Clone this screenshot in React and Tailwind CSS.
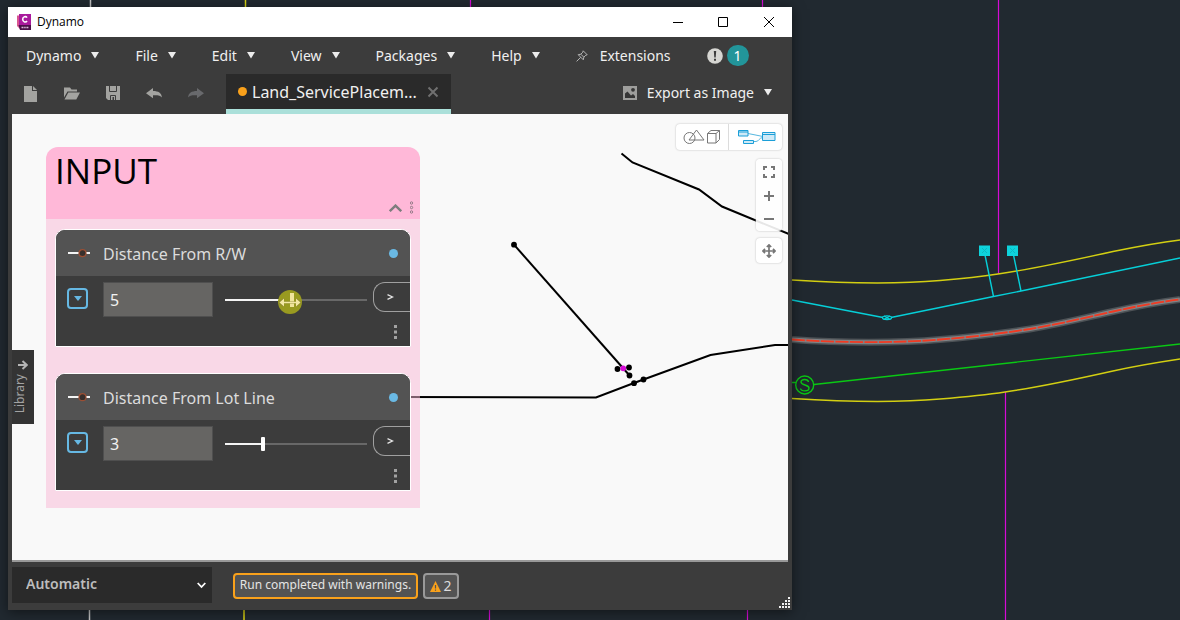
import { useState } from "react";

const menus = ["Dynamo", "File", "Edit", "View", "Packages", "Help"];

function Caret() {
  return (
    <svg width="8" height="8" viewBox="0 0 8 8" aria-hidden="true">
      <path d="M0 0h8L4 6.500z" fill="#ececec" />
    </svg>
  );
}

function SiteDrawing() {
  return (
    <svg
      className="absolute inset-0 h-full w-full"
      viewBox="0 0 1180 620"
      preserveAspectRatio="xMinYMin slice"
      fill="none"
      aria-hidden="true"
    >
      <path d="M90.500 0V8M89.500 608V620" stroke="#c4c4c4" strokeWidth="1.500" />
      <path d="M245.500 0V8" stroke="#d9d514" strokeWidth="1.500" />
      <path d="M244 608V620" stroke="#b0ac18" strokeWidth="2" />
      <path d="M470.500 0V8M762.500 0V8M489.500 608V620M747.500 608V620M998.500 0V274M1005.500 392V620" stroke="#d60bd6" strokeWidth="1.200" />
      <path
        d="M792 280C840 283 900 284 940 280.500C970 278 985 276 998 274C1035 268.500 1070 261 1113 251.500C1140 246 1160 242.500 1180 240"
        stroke="#d3cf12"
        strokeWidth="1.400"
      />
      <path
        d="M792 398.500C840 401.500 900 402.500 940 399C970 396.500 985 395 1005 392C1040 387 1075 379.500 1113 371C1140 365 1160 362 1180 359"
        stroke="#d3cf12"
        strokeWidth="1.400"
      />
      <g id="centerline">
        <path
          d="M792 339.500C840 343 900 343 940 339.500C980 336.500 1010 332 1030 329C1065 323 1090 316.500 1113 311.500C1140 305.500 1160 302 1180 299.500"
          stroke="#4d5256"
          strokeWidth="7"
        />
        <path
          d="M792 339.500C840 343 900 343 940 339.500C980 336.500 1010 332 1030 329C1065 323 1090 316.500 1113 311.500C1140 305.500 1160 302 1180 299.500"
          stroke="#7f8285"
          strokeWidth="4"
        />
        <path
          d="M792 339.500C840 343 900 343 940 339.500C980 336.500 1010 332 1030 329C1065 323 1090 316.500 1113 311.500C1140 305.500 1160 302 1180 299.500"
          stroke="#f23a22"
          strokeWidth="1.800"
          strokeDasharray="13 1.500"
        />
      </g>
      <g stroke="#06cfd8" strokeWidth="1.400">
        <path d="M792 300L883 317.500M891 317.500L993.500 296.500L1021 291L1180 258" />
        <path d="M985 255L993.500 296.500M1013.500 255L1021 291" />
        <ellipse cx="887" cy="317.700" rx="4.500" ry="1.800" />
        <path d="M884 316L890 319.500M884 319.500L890 316" />
      </g>
      <g fill="#0ed3dc">
        <rect x="979" y="245.500" width="11" height="10.500" />
        <rect x="1007" y="245.500" width="11" height="10.500" />
      </g>
      <path d="M982 248l5 5M987 248l-5 5M1010 248l5 5M1015 248l-5 5" stroke="#0cb8c2" />
      <g stroke="#0ac814" strokeWidth="1.400">
        <path d="M792 382.500H796M814 384.500L1180 344" />
        <circle cx="804.700" cy="385" r="9" />
        <path d="M808.500 382C808 379 801 378.500 801 382C801 385.500 809 384.500 809 388C809 392 801 391.500 800.500 388.500" />
      </g>
    </svg>
  );
}

function TitleBar() {
  return (
    <header className="flex h-[30px] items-center bg-white">
      <svg className="ml-[9px]" width="15" height="16" viewBox="0 0 15 16" aria-hidden="true">
        <path d="M0 1.500H3V15L0 12z" fill="#d8568f" />
        <path d="M2 0H14V11H2z" fill="#a91a9c" />
        <path d="M1.500 11H14V16H3z" fill="#4b1149" />
        <path d="M10 3.600C9 2 5.700 2.200 5.700 5.300S9 8.600 10 7" stroke="#fff" strokeWidth="1.600" fill="none" />
        <path d="M4.500 13.500h2m.7 0h1.500m.7 0h2" stroke="#d9b9d8" strokeWidth="1.500" />
      </svg>
      <h1 className="ml-[5px] font-['Open_Sans',sans-serif] text-xs text-black">Dynamo</h1>
      <div className="ml-auto flex h-full">
        <button type="button" aria-label="Minimize" className="grid w-[46px] place-items-center">
          <svg width="11" height="11" viewBox="0 0 11 11" stroke="#000">
            <path d="M1 5.500H11" />
          </svg>
        </button>
        <button type="button" aria-label="Maximize" className="grid w-[46px] place-items-center">
          <svg width="11" height="11" viewBox="0 0 11 11" stroke="#000" fill="none">
            <path d="M.5 .5H9.500V9.500H.5z" />
          </svg>
        </button>
        <button type="button" aria-label="Close" className="grid w-[46px] place-items-center">
          <svg width="11" height="11" viewBox="0 0 11 11" stroke="#000">
            <path d="M0 0L10 10M10 0L0 10" />
          </svg>
        </button>
      </div>
    </header>
  );
}

function MenuBar() {
  return (
    <nav className="flex h-[37px] items-center gap-9 whitespace-nowrap pl-[18px] text-sm text-[#f0f0f0]">
      {menus.map((name) => (
        <button key={name} type="button" className="flex items-center gap-2.5">
          {name}
          <Caret />
        </button>
      ))}
      <button type="button" className="flex items-center gap-3">
        <svg width="12" height="12" viewBox="0 0 12 12" fill="none" stroke="#b5b5b5" strokeWidth="1">
          <path d="M7.200 .8L11.200 4.800L9.800 5.200L7.800 7.200L7.300 9.800L2.200 4.700L4.800 4.200L6.800 2.200zM4.700 7.300L.6 11.400M4.800 4.200L7.800 7.200" />
        </svg>
        Extensions
      </button>
      <div className="flex items-center gap-1">
        <button type="button" aria-label="Notifications">
          <svg width="16" height="16" viewBox="0 0 16 16">
            <circle cx="8" cy="8" r="7.800" fill="#d6d6d2" />
            <path d="M6.800 3h2.400L8.700 9.500H7.300zM7 10.800h2v2H7z" fill="#3c3c3c" />
          </svg>
        </button>
        <span className="grid h-[21px] w-[22px] place-items-center rounded-full bg-[#22959a] text-white">1</span>
      </div>
    </nav>
  );
}

function Toolbar() {
  return (
    <div className="flex h-10 items-stretch whitespace-nowrap text-[#f0f0f0]">
      <div className="flex w-[218px] shrink-0 items-center gap-[25px] pb-0.5 pl-[15px]">
        <button type="button" aria-label="New">
          <svg width="16" height="17" viewBox="0 0 16 17" fill="#a3a3a0">
            <path d="M1 1H9V6H14V17H1zM10 1L14 5H10z" />
          </svg>
        </button>
        <button type="button" aria-label="Open">
          <svg width="17" height="16" viewBox="0 0 17 16" fill="#a3a3a0">
            <path d="M0 2.500H6L7.500 4.500H13V6.500H3.500L0 12.500z" />
            <path d="M4.300 7.500H16L12.300 14.500H.5z" />
          </svg>
        </button>
        <button type="button" aria-label="Save">
          <svg width="15" height="15" viewBox="0 0 15 15">
            <path d="M0 0H14V14H2L0 12z" fill="#a3a3a0" />
            <path d="M3.500 0V5.500H10.500V0M4.500 14V9.500H9.500V14" fill="none" stroke="#3c3c3c" />
            <path d="M6.500 11H8V14H6.500z" fill="#3c3c3c" />
          </svg>
        </button>
        <button type="button" aria-label="Undo">
          <svg width="17" height="12" viewBox="0 0 17 12" fill="#a3a3a0">
            <path d="M7 1V4C12.500 4 15.500 6 16 10.500C14 8.200 11.500 8.200 7 8.200V11.300L0 6.200z" />
          </svg>
        </button>
        <button type="button" aria-label="Redo">
          <svg width="17" height="12" viewBox="0 0 17 12" fill="#68696c">
            <path d="M9 1V4C3.500 4 .5 6 0 10.500C2 8.200 4.500 8.200 9 8.200V11.300L16 6.200z" />
          </svg>
        </button>
      </div>
      <div className="flex w-[225px] shrink-0 items-center border-b-[5px] border-[#abe0da] bg-[#2a2a2a] pl-3">
        <span className="h-[9px] w-[9px] rounded-full bg-[#f9a11b]" />
        <span className="ml-[5px] text-base">Land_ServicePlacem...</span>
        <button type="button" aria-label="Close tab" className="ml-auto mr-3">
          <svg width="12" height="12" viewBox="0 0 12 12" stroke="#707070" strokeWidth="2">
            <path d="M1.500 1.500L10.500 10.500M10.500 1.500L1.500 10.500" />
          </svg>
        </button>
      </div>
      <button type="button" className="ml-auto mr-5 flex items-center gap-2.5 pb-0.5 text-sm">
        <svg width="14" height="14" viewBox="0 0 14 14">
          <path d="M0 0H14V14H0z" fill="#9e9e9c" />
          <circle cx="10" cy="3.800" r="1.900" fill="#353535" />
          <path d="M2 7.500L4.500 5.500L8 9.500L10 8L12 10V12H2z" fill="#353535" />
        </svg>
        Export as Image
        <Caret />
      </button>
    </div>
  );
}

function SliderNode({ title, initial }) {
  const [value, setValue] = useState(initial);
  const min = 0.5;
  const max = 10;
  const filled = ((value - min) / (max - min)) * 100;
  const update = (event) => setValue(Number(event.target.value) || 0);
  return (
    <section className="overflow-hidden rounded-t-[10px] border border-white bg-[#3c3c3c]">
      <div className="flex h-[46px] items-center bg-[#535353] pl-3 pr-3 pt-px">
        <svg width="23" height="10" viewBox="0 0 23 10" aria-hidden="true">
          <path d="M0 4H11M18 4H22" stroke="#f4f4f4" strokeWidth="2" />
          <circle cx="14.500" cy="4.200" r="3.500" fill="#38302d" stroke="#9a4f34" strokeWidth="1.200" />
        </svg>
        <h3 className="ml-3 text-base text-[#dcdcdc]">{title}</h3>
        <span className="ml-auto h-[9px] w-[9px] rounded-full bg-[#6ab9e4]" />
      </div>
      <div className="flex h-[41px] items-center pl-[11px] pt-1.5">
        <button
          type="button"
          aria-label={`${title} range`}
          className="mt-1.5 grid h-[21px] w-[21px] shrink-0 place-items-center self-start rounded-sm border-2 border-[#66b8e3]"
        >
          <svg width="8" height="5" viewBox="0 0 8 5">
            <path d="M0 0H8L4 5z" fill="#66b8e3" />
          </svg>
        </button>
        <input
          type="text"
          aria-label={`${title} value`}
          value={value}
          onChange={update}
          className="ml-[15px] h-[35px] w-[110px] border border-[#4f4f4f] bg-[#666563] pl-1.5 text-base text-[#f2f2f2]"
        />
        <input
          type="range"
          aria-label={title}
          min={min}
          max={max}
          step="0.5"
          value={value}
          onChange={update}
          style={{ backgroundImage: `linear-gradient(to right, #f4f4f4 ${filled}%, #686868 ${filled}%)` }}
          className="ml-3 h-0.5 w-[142px] appearance-none [&::-webkit-slider-thumb]:h-3.5 [&::-webkit-slider-thumb]:w-1 [&::-webkit-slider-thumb]:appearance-none [&::-webkit-slider-thumb]:rounded-[1px] [&::-webkit-slider-thumb]:bg-white"
        />
        <button
          type="button"
          aria-label={`${title} output`}
          className="ml-1.5 flex h-[30px] flex-1 items-center self-start rounded-l-xl border border-r-0 border-[#a0a0a0] pl-[13px]"
        >
          <svg width="7" height="7" viewBox="0 0 7 7" fill="none" stroke="#e5e5e5" strokeWidth="1.300">
            <path d="M.5 .7L5.500 3L.5 5.400" />
          </svg>
        </button>
      </div>
      <div className="flex h-[29px] items-center justify-end pr-[13px]">
        <button type="button" aria-label={`${title} options`}>
          <svg width="3" height="14" viewBox="0 0 3 14" fill="#a2a2a2">
            <path d="M0 0H3V3H0zM0 5.500H3V8.500H0zM0 11H3V14H0z" />
          </svg>
        </button>
      </div>
    </section>
  );
}

function InputGroup() {
  return (
    <section className="absolute left-[34px] top-[33px] w-[374px] overflow-hidden rounded-t-xl">
      <div className="flex h-[72px] justify-between bg-[#ffb8d8] pl-[9px] pr-[6px]">
        <h2 className="font-['Open_Sans',sans-serif] text-[35px] leading-[48px] text-black">INPUT</h2>
        <div className="flex items-center gap-2 self-end pb-[5px]">
          <button type="button" aria-label="Collapse group">
            <svg width="13" height="8" viewBox="0 0 13 8" fill="none" stroke="#7d7d7d" strokeWidth="2.400">
              <path d="M.8 7.200L6.500 1.600L12.200 7.200" />
            </svg>
          </button>
          <button type="button" aria-label="Group options">
            <svg width="4" height="13" viewBox="0 0 4 13" fill="none" stroke="#8a7580" strokeWidth=".9">
              <circle cx="1.500" cy="2" r="1.200" />
              <circle cx="1.500" cy="6.500" r="1.200" />
              <circle cx="1.500" cy="11" r="1.200" />
            </svg>
          </button>
        </div>
      </div>
      <div className="flex flex-col gap-[26px] bg-[#f9b7d5]/50 px-[9px] pb-[17px] pt-2.5">
        <SliderNode title="Distance From R/W" initial={5} />
        <SliderNode title="Distance From Lot Line" initial={3} />
      </div>
    </section>
  );
}

function Geometry() {
  return (
    <svg className="absolute inset-0 h-full w-full" aria-hidden="true">
      <g transform="translate(-12 -114)">
        <g fill="none" stroke="#000" strokeWidth="2">
          <path d="M621.500 153.500L632.500 162.500L699 189.500L722 206.500L790 234.500" />
          <path d="M514 244.700L630 376" />
          <path d="M400 397L596 397.500L634 383L643.500 379.500L710.500 355L775 345H790" />
        </g>
        <g fill="#000">
          <circle cx="514" cy="244.700" r="2.900" />
          <circle cx="617.500" cy="369" r="2.900" />
          <circle cx="629" cy="367.500" r="2.900" />
          <circle cx="629.500" cy="375.500" r="2.900" />
          <circle cx="634" cy="383.200" r="2.900" />
          <circle cx="643.500" cy="379.500" r="2.900" />
        </g>
        <circle cx="623.200" cy="368.300" r="2.900" fill="#d60bd6" />
      </g>
    </svg>
  );
}

function ViewTools() {
  return (
    <div className="absolute right-1.5 top-2.5 flex flex-col items-end">
      <div className="flex h-[26px] divide-x divide-[#dcdcdc] rounded-sm bg-white shadow-[0_0_2px_#b8b8b8]">
        <button type="button" aria-label="Geometry view" className="grid w-[53px] place-items-center">
          <svg width="38" height="16" viewBox="0 0 38 16" fill="none" stroke="#777">
            <circle cx="6.500" cy="9" r="5.500" />
            <path d="M13.500 1L21 11H6zM24.500 4.500H33V14H24.500zM24.500 4.500L28 1.500H36.500V10.500L33 14M33 4.500L36.500 1.500" />
          </svg>
        </button>
        <button type="button" aria-label="Graph view" className="grid w-[53px] place-items-center pl-0.5">
          <svg width="38" height="15" viewBox="0 0 38 15" fill="#cfeaf7" stroke="#1b9fd8">
            <path d="M10 3.500L25 6.500M16 11.500H18C21 11.500 21 7.500 25 7.500" fill="none" stroke="#56b7df" />
            <path d="M.5 .5H10V6H.5zM.5 2H10M5.500 10.500H15.500V13.500H5.500zM24.500 2.500H37V10.500H24.500zM24.500 4.500H37" />
          </svg>
        </button>
      </div>
      <div className="mt-[9px] flex w-[26px] flex-col rounded-sm bg-white/90 shadow-[0_0_2px_#b8b8b8]">
        <button type="button" aria-label="Zoom to fit" className="grid h-[26px] place-items-center">
          <svg width="12" height="12" viewBox="0 0 12 12" fill="none" stroke="#777" strokeWidth="2">
            <path d="M1 4V1H4M8 1H11V4M11 8V11H8M4 11H1V8" />
          </svg>
        </button>
        <button type="button" aria-label="Zoom in" className="grid h-[22px] place-items-center">
          <svg width="10" height="10" viewBox="0 0 10 10" stroke="#777" strokeWidth="2">
            <path d="M5 0V10M0 5H10" />
          </svg>
        </button>
        <button type="button" aria-label="Zoom out" className="grid h-[24px] place-items-center">
          <svg width="10" height="2" viewBox="0 0 10 2">
            <path d="M0 0H10V2H0z" fill="#777" />
          </svg>
        </button>
      </div>
      <button
        type="button"
        aria-label="Pan"
        className="mt-[7px] grid h-[25px] w-[26px] place-items-center rounded-sm bg-white shadow-[0_0_2px_#b8b8b8]"
      >
        <svg width="14" height="14" viewBox="0 0 14 14" fill="none" stroke="#777" strokeWidth="1.700">
          <path d="M7 1V13M1 7H13M4.800 3L7 .9L9.200 3M4.800 11L7 13.100L9.200 11M3 4.800L.9 7L3 9.200M11 4.800L13.100 7L11 9.200" />
        </svg>
      </button>
    </div>
  );
}

function Workspace() {
  return (
    <main className="relative mx-1 min-h-[420px] flex-1 overflow-hidden border-b-2 border-[#999] bg-[#f9f9f9]">
      <Geometry />
      <InputGroup />
      <svg
        className="pointer-events-none absolute left-[266px] top-[176px]"
        width="24"
        height="24"
        viewBox="0 0 24 24"
        aria-hidden="true"
      >
        <circle cx="12" cy="12" r="12" fill="#999a20" />
        <path d="M12 3H16V17H12z" fill="#f0e49c" />
        <path d="M5 12.500H19M6 9L2 12.500L6 16M18 9L22 12.500L18 16" fill="none" stroke="#8c8430" strokeWidth="2" />
        <path d="M1.500 12.500L6 8.500V11.700H18V8.500L22.500 12.500L18 16.500V13.300H6V16.500z" fill="#f3e8a4" />
      </svg>
      <button
        type="button"
        className="absolute left-0 top-[236px] flex h-[74px] w-[22px] flex-col items-center bg-[#343434] pt-2.5 text-xs text-[#a3a3a3]"
      >
        <svg width="10" height="10" viewBox="0 0 10 10" fill="none" stroke="#b5b5b5" strokeWidth="2">
          <path d="M0 5H8.500M4.500 1L8.700 5L4.500 9" />
        </svg>
        <span className="mr-1.5 mt-1 rotate-180 [writing-mode:vertical-rl]">Library</span>
      </button>
      <ViewTools />
    </main>
  );
}

function StatusBar() {
  return (
    <footer className="relative flex h-12 items-start whitespace-nowrap pl-1 pt-[5px]">
      <div className="relative w-[200px]">
        <select
          aria-label="Run mode"
          className="h-9 w-full appearance-none bg-[#2a2a2a] px-3.5 pb-0.5 text-sm font-semibold text-[#bdbdbd]"
        >
          <option>Automatic</option>
          <option>Manual</option>
        </select>
        <svg className="pointer-events-none absolute right-1.5 top-[15px]" width="9" height="7" viewBox="0 0 9 7" fill="none" stroke="#fff" strokeWidth="1.800">
          <path d="M.7 1L4.500 5L8.300 1" />
        </svg>
      </div>
      <p
        role="status"
        className="ml-[21px] mt-1.5 grid h-[26px] w-[185px] place-items-center rounded border-2 border-[#f9a11b] bg-[#535353] pb-0.5 text-xs text-[#e4e4e4]"
      >
        Run completed with warnings.
      </p>
      <button
        type="button"
        aria-label="2 warnings"
        className="ml-[5px] mt-1.5 flex h-[26px] w-9 items-center justify-center gap-0.5 rounded border-2 border-[#999] bg-[#535353] text-sm text-[#dcdcdc]"
      >
        <svg width="11" height="11" viewBox="0 0 11 11">
          <path d="M5.500 0L11 11H0z" fill="#f9a11b" />
          <path d="M4.900 4H6.100V7.500H4.900zM4.900 8.500H6.100V9.800H4.900z" fill="#535353" />
        </svg>
        2
      </button>
      <svg className="absolute bottom-0.5 right-0.5" width="11" height="11" viewBox="0 0 11 11" fill="#f2f2f2" aria-hidden="true">
        <path d="M9 0h2v2h-2zM6 3h2v2h-2zM9 3h2v2h-2zM3 6h2v2h-2zM6 6h2v2h-2zM9 6h2v2h-2zM0 9h2v2h-2zM3 9h2v2h-2zM6 9h2v2h-2zM9 9h2v2h-2z" />
      </svg>
    </footer>
  );
}

export default function App() {
  return (
    <div className="relative grid min-h-screen grid-cols-[minmax(0,784fr)_minmax(0,388fr)] bg-[#212930] pb-2.5 pl-2 pt-[7px] font-['Noto_Sans','Open_Sans',sans-serif]">
      <SiteDrawing />
      <div className="relative flex flex-col bg-[#3c3c3c] shadow-[0_2px_12px_rgba(0,0,0,0.5)]">
        <TitleBar />
        <MenuBar />
        <Toolbar />
        <Workspace />
        <StatusBar />
      </div>
    </div>
  );
}
